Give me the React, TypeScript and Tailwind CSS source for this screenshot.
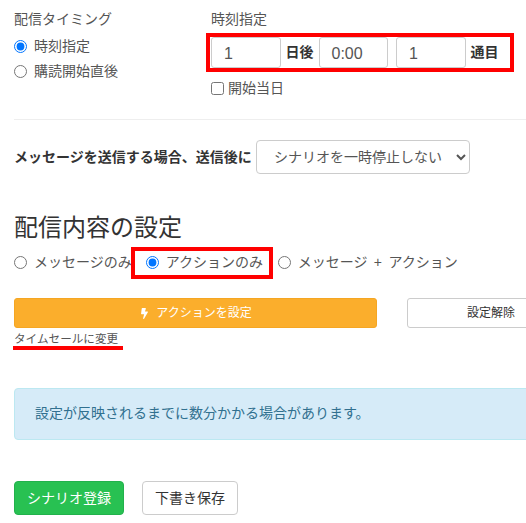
import { FaBolt } from "react-icons/fa";

const FONT = "font-['Liberation_Sans','Noto_Sans_CJK_JP',sans-serif]";

function Radio({ label, checked, className = "" }: { label: string; checked?: boolean; className?: string }) {
  return (
    <label className={`flex items-center ${className}`}>
      <input type="radio" name={label} defaultChecked={checked} className="m-0 h-[13px] w-[13px] accent-[#0075ff]" />
      <span className="ml-[7px] whitespace-nowrap">{label}</span>
    </label>
  );
}

function TimeInput({ value }: { value: string }) {
  return (
    <div className="flex h-[31px] w-[69.5px] shrink-0 items-center rounded-[3px] border border-[#ccc] pl-[12px] pt-[2px] text-[16px] text-[#555]">
      {value}
    </div>
  );
}

export default function App() {
  return (
    <div className={`${FONT} h-[523px] w-[526px] overflow-hidden bg-white text-[14px] text-[#555]`}>
      {/* 配信タイミング */}
      <div className="flex pl-[14px] pt-[9px]">
        <div className="w-[197px] shrink-0">
          <p className="h-[20px] leading-[20px]">配信タイミング</p>
          <Radio label="時刻指定" checked className="mt-[7px] h-[20px]" />
          <Radio label="購読開始直後" className="mt-[5px] h-[20px]" />
        </div>
        <div className="shrink-0">
          <p className="h-[20px] leading-[20px]">時刻指定</p>
          <div className="-ml-[5px] mt-[4px] flex h-[39px] w-[308px] items-center border-[4px] border-[#f00] pl-px">
            <TimeInput value="1" />
            <b className="ml-[5px] w-[33px] shrink-0 text-[#333]">日後</b>
            <TimeInput value="0:00" />
            <span className="w-[8px] shrink-0" />
            <TimeInput value="1" />
            <b className="ml-[5px] shrink-0 text-[#333]">通目</b>
          </div>
          <label className="mt-[6px] flex h-[20px] items-center">
            <input type="checkbox" className="m-0 h-[13px] w-[13px]" />
            <span className="ml-[4px]">開始当日</span>
          </label>
        </div>
      </div>

      <hr className="ml-[14px] mt-[21px] border-0 border-t border-[#eee]" />

      {/* 一時停止 */}
      <div className="ml-[14px] mt-[20px] flex items-center">
        <b className="w-[242px] shrink-0 whitespace-nowrap text-[#333]">メッセージを送信する場合、送信後に</b>
        <select className="h-[34px] w-[214px] rounded-[4px] border border-[#ccc] bg-white pl-[13px] text-[14px] text-[#555]">
          <option>シナリオを一時停止しない</option>
        </select>
      </div>

      {/* 配信内容の設定 */}
      <h2 className="ml-[14px] mt-[37px] h-[34px] text-[24px] font-normal leading-[34px] text-[#333]">配信内容の設定</h2>
      <div className="ml-[14px] mt-[2px] flex h-[31px] items-center">
        <Radio label="メッセージのみ" />
        <div className="ml-[-1px] flex h-[32px] w-[142px] shrink-0 items-center border-[4px] border-[#f00] pl-[11px]">
          <Radio label="アクションのみ" checked />
        </div>
        <Radio label="メッセージ + アクション" className="ml-[5px] [word-spacing:2.5px]" />
      </div>

      {/* アクション */}
      <div className="ml-[14px] mt-[20px] flex">
        <button className="flex h-[30px] w-[363px] shrink-0 items-center justify-center rounded-[3px] border border-[#f5a623] bg-[#fbae2c] text-[12px] text-white">
          <FaBolt size={11} className="mr-[6px]" />
          アクションを設定
        </button>
        <button className="ml-[30px] h-[30px] w-[168px] shrink-0 rounded-[3px] border border-[#ccc] bg-white text-center text-[12px] text-[#333]">
          設定解除
        </button>
      </div>
      <div className="ml-[14px] mt-[4px] h-[14px] whitespace-nowrap text-[11.6px] leading-[14px]">タイムセールに変更</div>
      <div className="ml-[13px] h-[4px] w-[110px] bg-[#f00]" />

      {/* お知らせ */}
      <div className="ml-[14px] mt-[38px] flex h-[52px] w-[530px] items-center rounded-[4px] border border-[#bce8f1] bg-[#d6ebf8] pb-[2px] pl-[20px] text-[#31708f]">
        設定が反映されるまでに数分かかる場合があります。
      </div>

      <div className="ml-[14px] mt-[41px] flex gap-[18px]">
        <button className="h-[34px] w-[110px] rounded-[4px] border border-[#22b14c] bg-[#28c152] text-white">シナリオ登録</button>
        <button className="h-[34px] w-[96px] rounded-[4px] border border-[#ccc] bg-white text-[#333]">下書き保存</button>
      </div>
    </div>
  );
}
